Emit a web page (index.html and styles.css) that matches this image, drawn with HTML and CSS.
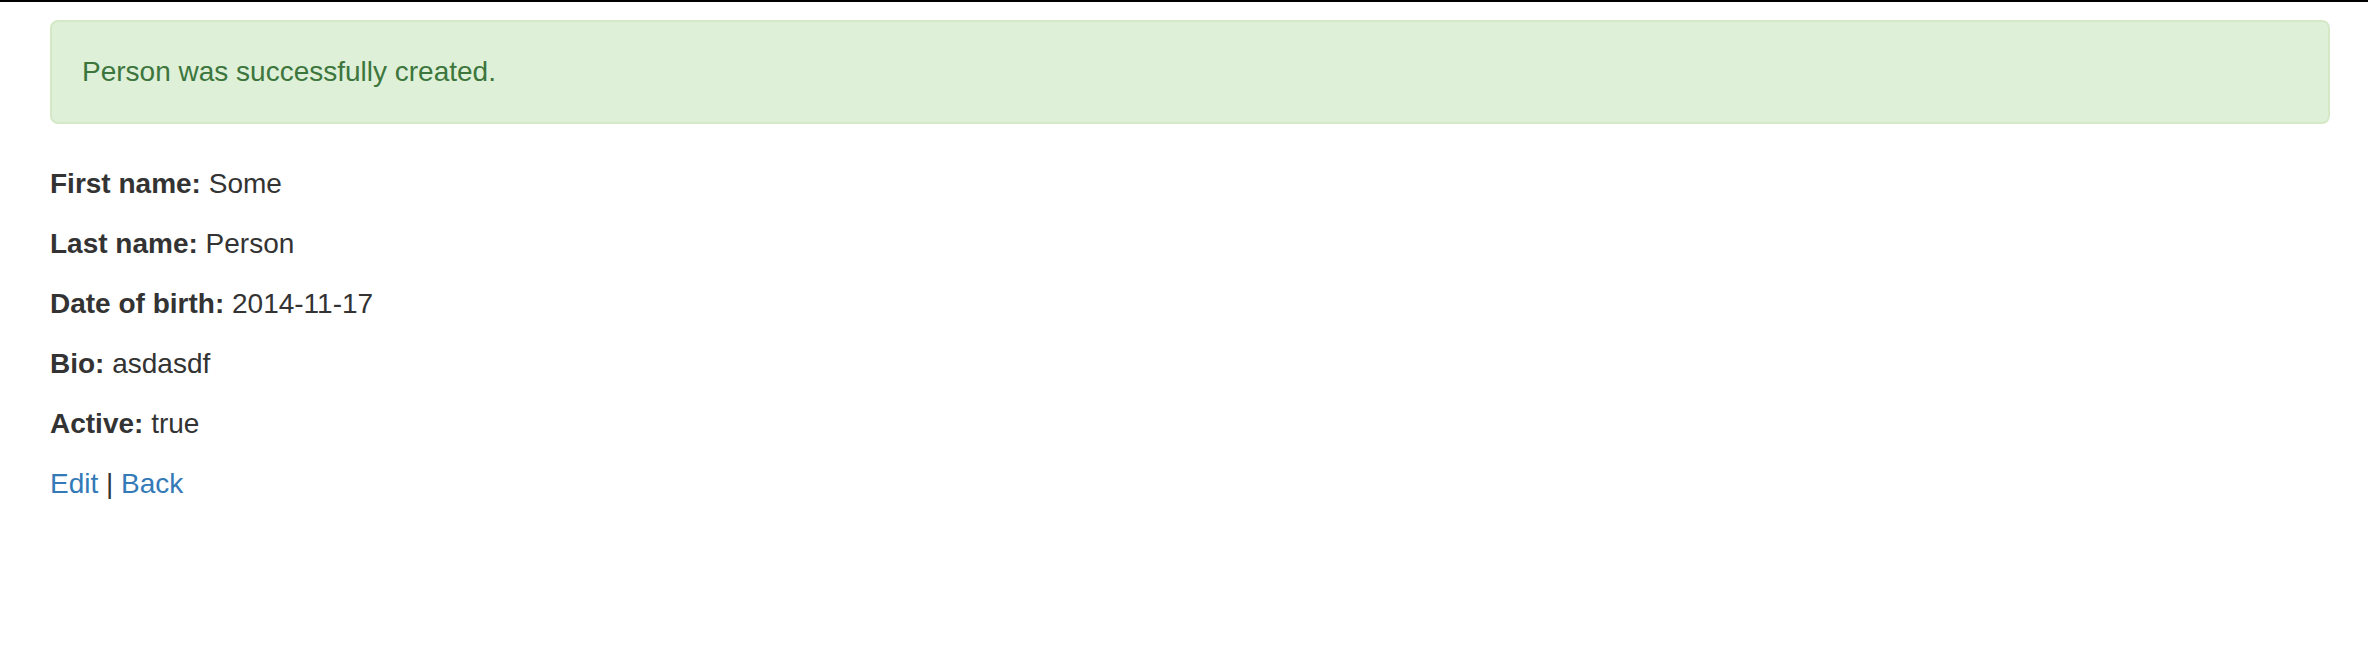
FILE: index.html
```html
<!DOCTYPE html>
<html lang="en">
<head>
<meta charset="utf-8">
<title>Person</title>
<link rel="stylesheet" href="styles.css">
</head>
<body>
<div class="topbar"></div>
<div class="container">
  <div class="alert alert-success">Person was successfully created.</div>
  <p><strong>First name:</strong> Some</p>
  <p><strong>Last name:</strong> Person</p>
  <p><strong>Date of birth:</strong> 2014-11-17</p>
  <p><strong>Bio:</strong> asdasdf</p>
  <p><strong>Active:</strong> true</p>
  <p class="links"><a href="#">Edit</a> | <a href="#">Back</a></p>
</div>
</body>
</html>
```
FILE: styles.css
```css
html, body {
  margin: 0;
  padding: 0;
  background: #fff;
}
body {
  font-family: "Liberation Sans", Arial, Helvetica, sans-serif;
  font-size: 28px;
  line-height: 40px;
  color: #333;
}
.topbar {
  height: 2px;
  background: #000;
}
.container {
  padding: 18px 38px 0 50px;
}
.alert {
  padding: 30px;
  margin-bottom: 40px;
  border: 2px solid #d6e9c6;
  border-radius: 8px;
}
.alert-success {
  background: #dff0d8;
  color: #3c763d;
}
p {
  margin: 0 0 20px;
}
strong {
  font-weight: bold;
}
a {
  color: #337ab7;
  text-decoration: none;
}
```
